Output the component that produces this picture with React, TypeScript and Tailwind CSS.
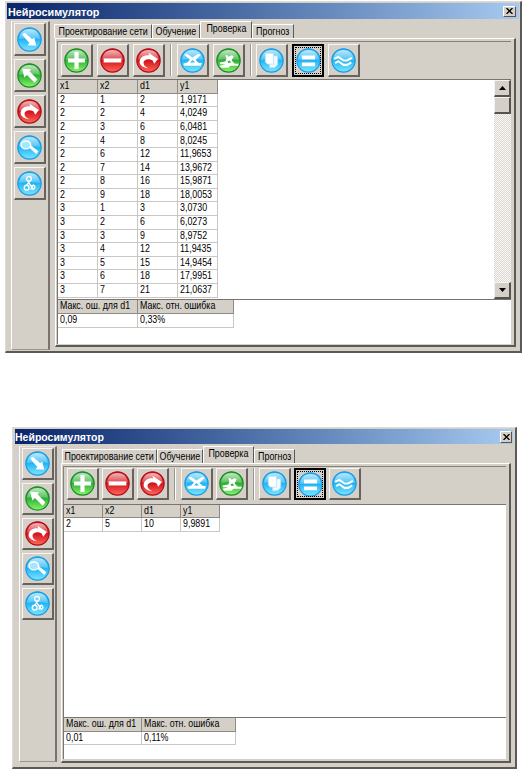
import React from "react";

type IconKind = "in" | "out" | "redo" | "key" | "amp" | "plus" | "minus" | "net" | "netGreen" | "copy" | "equals" | "wave";

const palette: Record<string, [string, string, string]> = {
  blue: ["#1899e8", "#22b5f4", "#7fe6ff"],
  green: ["#178a22", "#2eb035", "#8cf56f"],
  red: ["#b00c18", "#d3141c", "#ff6a5c"],
};

const tone: Record<IconKind, string> = {
  in: "blue", out: "green", redo: "red", key: "blue", amp: "blue", plus: "green",
  minus: "red", net: "blue", netGreen: "green", copy: "blue", equals: "blue", wave: "blue",
};

function Glyph({ kind }: { kind: IconKind }) {
  switch (kind) {
    case "in":
      return <path d="M5 7 7.500 5.500 14.500 11.500 16.500 10 18.500 18 10 17.500 12 15.300 8 11Z" fill="#fff" />;
    case "out":
      return <path d="M5 5.500 13.500 6 12 8 19.500 15.500 17 19 9.500 11.500 7 14Z" fill="#fff" />;
    case "redo":
      return <path d="M12 19.500C5.500 19 3 15.500 3.500 12.500 4.500 8.500 8.500 6.500 12.700 7.200L12 4.500 21 10.500 17.500 15 16 12C12 9.500 7.500 11 7.200 14 7 16.500 9 18.500 12 19.500Z" fill="#fff" />;
    case "key":
      return (
        <g fill="#a6e6ff" stroke="#fff">
          <ellipse cx="8.500" cy="9.500" rx="4.600" ry="3.800" strokeWidth="1.400" />
          <path d="m12 12 1.500-1.500 6.500 5-1.500 2.300Z" fill="#fff" strokeWidth=".8" />
        </g>
      );
    case "amp":
      return (
        <g fill="none" stroke="#fff" strokeWidth="1.300">
          <circle cx="11.500" cy="7.500" r="2.300" />
          <path d="m12 10-3 4m2-3 5 7M16 13l-3 5" />
          <circle cx="9.300" cy="16" r="2.300" />
          <circle cx="15.500" cy="15.500" r="1.700" />
        </g>
      );
    case "plus":
      return <path d="M10 3.800h4v6.200h6.200v4h-6.200v6.200h-4v-6.200H3.800v-4h6.200Z" fill="#fff" />;
    case "minus":
      return <path d="M3.500 10h17v3.900h-17Z" fill="#fff" />;
    case "net":
      return (
        <g fill="#fff">
          <path d="M4 6.500 6.500 5.500 12 9 17.500 5.500 20 6.500 15 11.500 18 14.500h3L20 17H4L3 15l4-1 2.500-3Z" />
          <path d="m9.500 14 2.500-2.500 2.500 2.500Z" fill="#39baf0" />
        </g>
      );
    case "netGreen":
      return (
        <g fill="#fff">
          <path d="M9 7h2l1 1.500L15 7l2 1-2 4 3 3h4L21 17h-7l-2 2H5l-1.500-2L9 15.500H4L3.500 14l5.500-1 1-3Z" />
          <path d="m11 13 2-1 1.500 2-2.500.500Z" fill="#35ae38" />
        </g>
      );
    case "copy":
      return (
        <g stroke="#9fdcf6" strokeWidth=".6">
          <path d="M10 7.500h8V16l-3 3h-5Z" fill="#f1faff" />
          <path d="M6 5h8v10.500H8l-2-2Z" fill="#fff" />
        </g>
      );
    case "equals":
      return <path d="M5.700 7.200h12.600v3.800H5.700ZM5.700 13.800h12.600v3.800H5.700Z" fill="#fff" />;
    case "wave":
      return (
        <g fill="none" stroke="#fff" strokeWidth="2">
          <path d="M3 10.500 7 8.500l5 3.500h3.500L20 9.500" />
          <path d="M4 14.500 7 12.700l5 3.500h3.500l4-2.500" />
        </g>
      );
  }
}

function Orb({ kind }: { kind: IconKind }) {
  const name = tone[kind];
  const [edge, mid, light] = palette[name];
  const id = React.useId();
  return (
    <svg viewBox="0 0 24 24" className="block size-[25px] shrink-0">
      <defs>
        <linearGradient id={id + "b"} x1="0" y1="0" x2="0" y2="1">
          <stop offset="0" stopColor={mid} />
          <stop offset=".5" stopColor={mid} />
          <stop offset="1" stopColor={light} />
        </linearGradient>
        <linearGradient id={id + "g"} x1="0" y1="0" x2="0" y2="1">
          <stop offset="0" stopColor="#fff" stopOpacity=".7" />
          <stop offset="1" stopColor="#fff" stopOpacity=".2" />
        </linearGradient>
      </defs>
      <circle cx="12" cy="12" r="11.200" fill={`url(#${id}b)`} stroke={edge} strokeWidth="1.100" />
      <path d="M2 11.500C2.500 4.500 7 1.800 12 1.800S21.500 4.500 22 11.500Q12 9.500 2 11.500Z" fill={`url(#${id}g)`} />
      <Glyph kind={kind} />
    </svg>
  );
}

const face = "border-l border-t border-l-[#f8f6f2] border-t-[#f8f6f2] border-r-2 border-b-2 border-r-[#66635f] border-b-[#66635f]";
const focusFace = "border-2 border-black outline-1 -outline-offset-4 outline-dotted outline-black";

function ToolButton({ kind, size, focused = false }: { kind: IconKind; size: string; focused?: boolean }) {
  return (
    <button className={`flex shrink-0 items-center justify-center bg-[#d4d0c8] ${focused ? focusFace : face} ${size}`}>
      <Orb kind={kind} />
    </button>
  );
}

function Divider() {
  return <div className="h-[32px] w-[2px] shrink-0 border-l border-r border-l-[#9a9690] border-r-white" />;
}

interface Skin {
  frame: string;
  title: string;
  titleText: string;
  close: string;
  body: string;
  side: string;
  sideButton: string;
  tabs: string;
  tabWidths: string[];
  page: string;
  toolbar: string;
  button: string;
  groupA: string;
  groupB: string;
  groupC: string;
  upper: string;
  cols: string;
  row: string;
  lower: string;
  lowerCols: string;
  lowerHead: string;
  lowerRow: string;
}

const tabNames = ["Проектирование сети", "Обучение", "Проверка", "Прогноз"];
const sideIcons: IconKind[] = ["in", "out", "redo", "key", "amp"];

function Cells({ values, head, cols, row }: { values: string[]; head?: boolean; cols: string; row: string }) {
  return (
    <div className={`grid ${cols} ${row}`}>
      {values.map((v, i) => (
        <div
          key={i}
          className={`flex min-w-0 items-center border-b border-r pl-[2px] whitespace-nowrap ${head ? "border-r-[#8d8a85] border-b-[#8d8a85] bg-[#d4d0c8]" : "border-r-[#c9c7c3] border-b-[#c9c7c3] bg-white"}`}
        >
          <span className="inline-block origin-left scale-x-[.86]">{v}</span>
        </div>
      ))}
    </div>
  );
}

function ScrollBar() {
  const knob = "flex h-[17px] w-[17px] shrink-0 items-center justify-center border-l border-t border-l-[#f5f3ef] border-t-[#f5f3ef] border-r-2 border-b-2 border-r-[#55524f] border-b-[#55524f] bg-[#d4d0c8]";
  return (
    <div className="flex h-full w-[17px] shrink-0 flex-col bg-[#e9e7e3] bg-[repeating-conic-gradient(#dcd8d1_0_25%,#f8f7f5_0_50%)] bg-size-[2px_2px]">
      <div className={knob}>
        <svg viewBox="0 0 7 4" className="h-[4px] w-[7px]"><path d="M3.500 0 7 4H0Z" /></svg>
      </div>
      <div className={knob} />
      <div className="flex-1" />
      <div className={knob}>
        <svg viewBox="0 0 7 4" className="h-[4px] w-[7px]"><path d="M0 0h7L3.500 4Z" /></svg>
      </div>
    </div>
  );
}

function SimulatorWindow({ skin, rows, summary, scroll = false }: { skin: Skin; rows: string[][]; summary: string[]; scroll?: boolean }) {
  return (
    <section className={`flex flex-col border-l border-t border-l-[#dedbd5] border-t-[#dedbd5] border-r-2 border-b-2 border-r-[#5c5a57] border-b-[#5c5a57] bg-[#d4d0c8] ${skin.frame}`}>
      <header className={`flex shrink-0 items-center justify-between bg-linear-to-r from-[#0a246a] to-[#a6caf0] ${skin.title}`}>
        <h1 className={`leading-none font-bold whitespace-nowrap text-white ${skin.titleText}`}>Нейросимулятор</h1>
        <button className={`flex items-center justify-center border-l border-t border-r border-b border-white border-r-[#55524f] border-b-[#55524f] bg-[#d4d0c8] ${skin.close}`}>
          <svg viewBox="0 0 7 6" className="h-[6px] w-[7px]"><path d="m.5 0 6 6m0-6-6 6" stroke="#000" strokeWidth="1.300" /></svg>
        </button>
      </header>
      <div className={`flex ${skin.body}`}>
        <aside className={`flex shrink-0 flex-col border-l border-l-white border-t border-t-[#e9e6e1] border-r-2 border-r-[#777470] border-b border-b-[#99958f] ${skin.side}`}>
          {sideIcons.map((kind) => <ToolButton key={kind} kind={kind} size={skin.sideButton} />)}
        </aside>
        <main className="flex flex-col">
          <nav className={`flex shrink-0 items-end ${skin.tabs}`}>
            {tabNames.map((name, i) => (
              <div
                key={name}
                className={`flex shrink-0 justify-center border-l border-t border-l-white border-t-white border-r border-r-[#5d5a57] text-[10px] leading-none whitespace-nowrap ${i === 2 ? "h-[17px] pt-[2px]" : "h-[14px] pt-[2px]"} ${skin.tabWidths[i]}`}
              >
                <span className="inline-block scale-x-[.89]">{name}</span>
              </div>
            ))}
          </nav>
          <div className={`flex flex-col border-l border-t border-l-white border-t-white border-r-2 border-b-2 border-r-[#5c5a57] border-b-[#5c5a57] ${skin.page}`}>
            <div className={`flex shrink-0 border-l border-t border-[#85827e] ${skin.toolbar}`}>
              <div className={`flex ${skin.groupA}`}>
                <ToolButton kind="plus" size={skin.button} />
                <ToolButton kind="minus" size={skin.button} />
                <ToolButton kind="redo" size={skin.button} />
              </div>
              <Divider />
              <div className={`flex ${skin.groupB}`}>
                <ToolButton kind="net" size={skin.button} />
                <ToolButton kind="netGreen" size={skin.button} />
              </div>
              <Divider />
              <div className={`flex ${skin.groupC}`}>
                <ToolButton kind="copy" size={skin.button} />
                <ToolButton kind="equals" size={skin.button} focused />
                <ToolButton kind="wave" size={skin.button} />
              </div>
            </div>
            <div className={`flex shrink-0 justify-between overflow-hidden border-l border-t border-[#77746f] bg-white ${skin.upper}`}>
              <div className="flex flex-col">
                <Cells values={["x1", "x2", "d1", "y1"]} head cols={skin.cols} row={skin.row} />
                {rows.map((r, i) => <Cells key={i} values={r} cols={skin.cols} row={skin.row} />)}
              </div>
              {scroll && <ScrollBar />}
            </div>
            <div className={`overflow-hidden border-l border-t border-[#77746f] bg-white ${skin.lower}`}>
              <Cells values={["Макс. ош. для d1", "Макс. отн. ошибка"]} head cols={skin.lowerCols} row={skin.lowerHead} />
              <Cells values={summary} cols={skin.lowerCols} row={skin.lowerRow} />
            </div>
          </div>
        </main>
      </div>
    </section>
  );
}

const large: Skin = {
  frame: "ml-[5px] h-[352px] w-[517px]",
  title: "mx-[1px] mt-[1px] h-[16px] pl-[1px] pr-[3px]",
  titleText: "pt-[2px] text-[10.8px]",
  close: "h-[11px] w-[13px]",
  body: "pl-[5px] pt-[2px]",
  side: "h-[329px] w-[39px] gap-[3px] pl-[2px] pt-[1px]",
  sideButton: "h-[33px] w-[32px]",
  tabs: "ml-[4px] h-[17px]",
  tabWidths: ["w-[98px]", "w-[48px]", "w-[52px]", "w-[42px]"],
  page: "ml-[5px] h-[309px] w-[461px] pl-[1px] pt-[2px] pr-[3px] pb-[1px]",
  toolbar: "h-[38px] pl-[3px] pt-[2px]",
  button: "h-[33px] w-[32px]",
  groupA: "mr-[5px] gap-[4px]",
  groupB: "mx-[5px] gap-[4px]",
  groupC: "ml-[4px] gap-[4px]",
  upper: "h-[220px]",
  cols: "grid-cols-[40px_40px_40px_40px]",
  row: "h-[13.6px] leading-none",
  lower: "h-[45px]",
  lowerCols: "grid-cols-[80px_96px]",
  lowerHead: "h-[14px] leading-none",
  lowerRow: "h-[14px] leading-none",
};

const small: Skin = {
  frame: "ml-[12px] mt-[74px] h-[342px] w-[505px]",
  title: "mx-[2px] mt-[1px] h-[15px] pr-[1px]",
  titleText: "pt-[1px] text-[10.5px]",
  close: "h-[12px] w-[12px]",
  body: "pl-[6px] pt-[2px]",
  side: "h-[316px] w-[38px] gap-[3px] pl-[2px] pt-[1px]",
  sideButton: "h-[32px] w-[32px]",
  tabs: "ml-[5px] h-[17px]",
  tabWidths: ["w-[95px]", "w-[46px]", "w-[51px]", "w-[41px]"],
  page: "ml-[4px] h-[300px] w-[450px] pl-[1px] pt-[2px] pr-[3px] pb-[2px]",
  toolbar: "h-[38px] pl-[3px] pt-[1px]",
  button: "h-[32px] w-[32px]",
  groupA: "mr-[5px] gap-[3px]",
  groupB: "mx-[5px] gap-[3px]",
  groupC: "ml-[4px] gap-[3px]",
  upper: "h-[213px]",
  cols: "grid-cols-[39px_39px_39px_39px]",
  row: "h-[13.3px] leading-none",
  lower: "h-[43px]",
  lowerCols: "grid-cols-[78px_94px]",
  lowerHead: "h-[14px] leading-none",
  lowerRow: "h-[13px] leading-none",
};

const testRows = [
  ["2", "1", "2", "1,9171"],
  ["2", "2", "4", "4,0249"],
  ["2", "3", "6", "6,0481"],
  ["2", "4", "8", "8,0245"],
  ["2", "6", "12", "11,9653"],
  ["2", "7", "14", "13,9672"],
  ["2", "8", "16", "15,9871"],
  ["2", "9", "18", "18,0053"],
  ["3", "1", "3", "3,0730"],
  ["3", "2", "6", "6,0273"],
  ["3", "3", "9", "8,9752"],
  ["3", "4", "12", "11,9435"],
  ["3", "5", "15", "14,9454"],
  ["3", "6", "18", "17,9951"],
  ["3", "7", "21", "21,0637"],
];

export default function App() {
  return (
    <div className="flex h-[779px] w-[527px] flex-col overflow-hidden bg-white pt-[1px] font-['Liberation_Sans',Arial,sans-serif] text-[10.3px] text-black">
      <SimulatorWindow skin={large} rows={testRows} summary={["0,09", "0,33%"]} scroll />
      <SimulatorWindow skin={small} rows={[["2", "5", "10", "9,9891"]]} summary={["0,01", "0,11%"]} />
    </div>
  );
}
